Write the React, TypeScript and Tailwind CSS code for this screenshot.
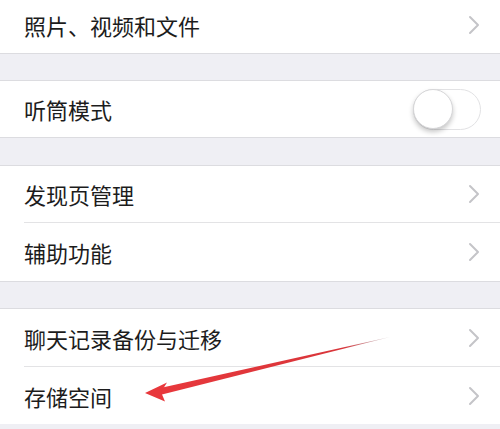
import React from 'react';

const Chevron = () => (
  <svg width="12" height="20" viewBox="0 0 12 20" className="shrink-0">
    <path d="M2 2 L10 10 L2 18" fill="none" stroke="#c4c4c8" strokeWidth="2" strokeLinecap="round" strokeLinejoin="round" />
  </svg>
);

const Toggle = () => (
  <div className="relative w-[68px] h-[41px] rounded-full border-[1.5px] border-[#e2e2e4] bg-white shrink-0">
    <div className="absolute left-[-1px] top-[-1px] w-[40px] h-[40px] rounded-full bg-white border border-[#d6d6d8] shadow-[0_3px_5px_rgba(0,0,0,0.22)]" />
  </div>
);

interface RowProps {
  label: string;
  h: string;
  divider?: boolean;
  right?: React.ReactNode;
  extra?: string;
}

const Row: React.FC<RowProps> = ({ label, h, divider, right, extra = '' }) => (
  <div className={`bg-white pl-6 ${h}`}>
    <div className={`flex items-center justify-between h-full pr-5 ${divider ? 'border-b border-[#e3e3e5]' : ''} ${extra}`}>
      <span className="text-[22px] leading-none text-[#1c1c1c]">{label}</span>
      {right ?? <Chevron />}
    </div>
  </div>
);

const Gap = ({ h }: { h: string }) => (
  <div className={`bg-[#efeff4] border-y border-[#dcdce0] ${h}`} />
);

export default function App() {
  return (
    <div
      className="relative w-[500px] h-[429px] overflow-hidden bg-[#efeff4]"
      style={{ fontFamily: '"Noto Sans CJK SC", "Noto Sans", sans-serif' }}
    >
      <Row label="照片、视频和文件" h="h-[53px]" extra="pb-1" />
      <Gap h="h-[28px]" />
      <div className="bg-white h-[56px] pl-6 pr-[19px] flex items-center justify-between">
        <span className="text-[22px] leading-none text-[#1c1c1c]">听筒模式</span>
        <Toggle />
      </div>
      <Gap h="h-[29px]" />
      <Row label="发现页管理" h="h-[57px]" divider />
      <Row label="辅助功能" h="h-[58px]" />
      <Gap h="h-[28px]" />
      <Row label="聊天记录备份与迁移" h="h-[58px]" divider />
      <Row label="存储空间" h="h-[57px]" />

      {/* red annotation arrow */}
      <svg className="absolute inset-0 pointer-events-none" width="500" height="429" viewBox="0 0 500 429">
        <defs>
          <linearGradient id="tail" x1="390" y1="337" x2="160" y2="390" gradientUnits="userSpaceOnUse">
            <stop offset="0" stopColor="#9a8a90" stopOpacity="0.5" />
            <stop offset="0.2" stopColor="#d8353a" />
            <stop offset="1" stopColor="#e8383c" />
          </linearGradient>
        </defs>
        <polygon points="390,337 158,388.5 160,395" fill="url(#tail)" />
        <polygon points="145,393 167,382.5 161,392 165,401.5" fill="#e8383c" />
      </svg>
    </div>
  );
}
